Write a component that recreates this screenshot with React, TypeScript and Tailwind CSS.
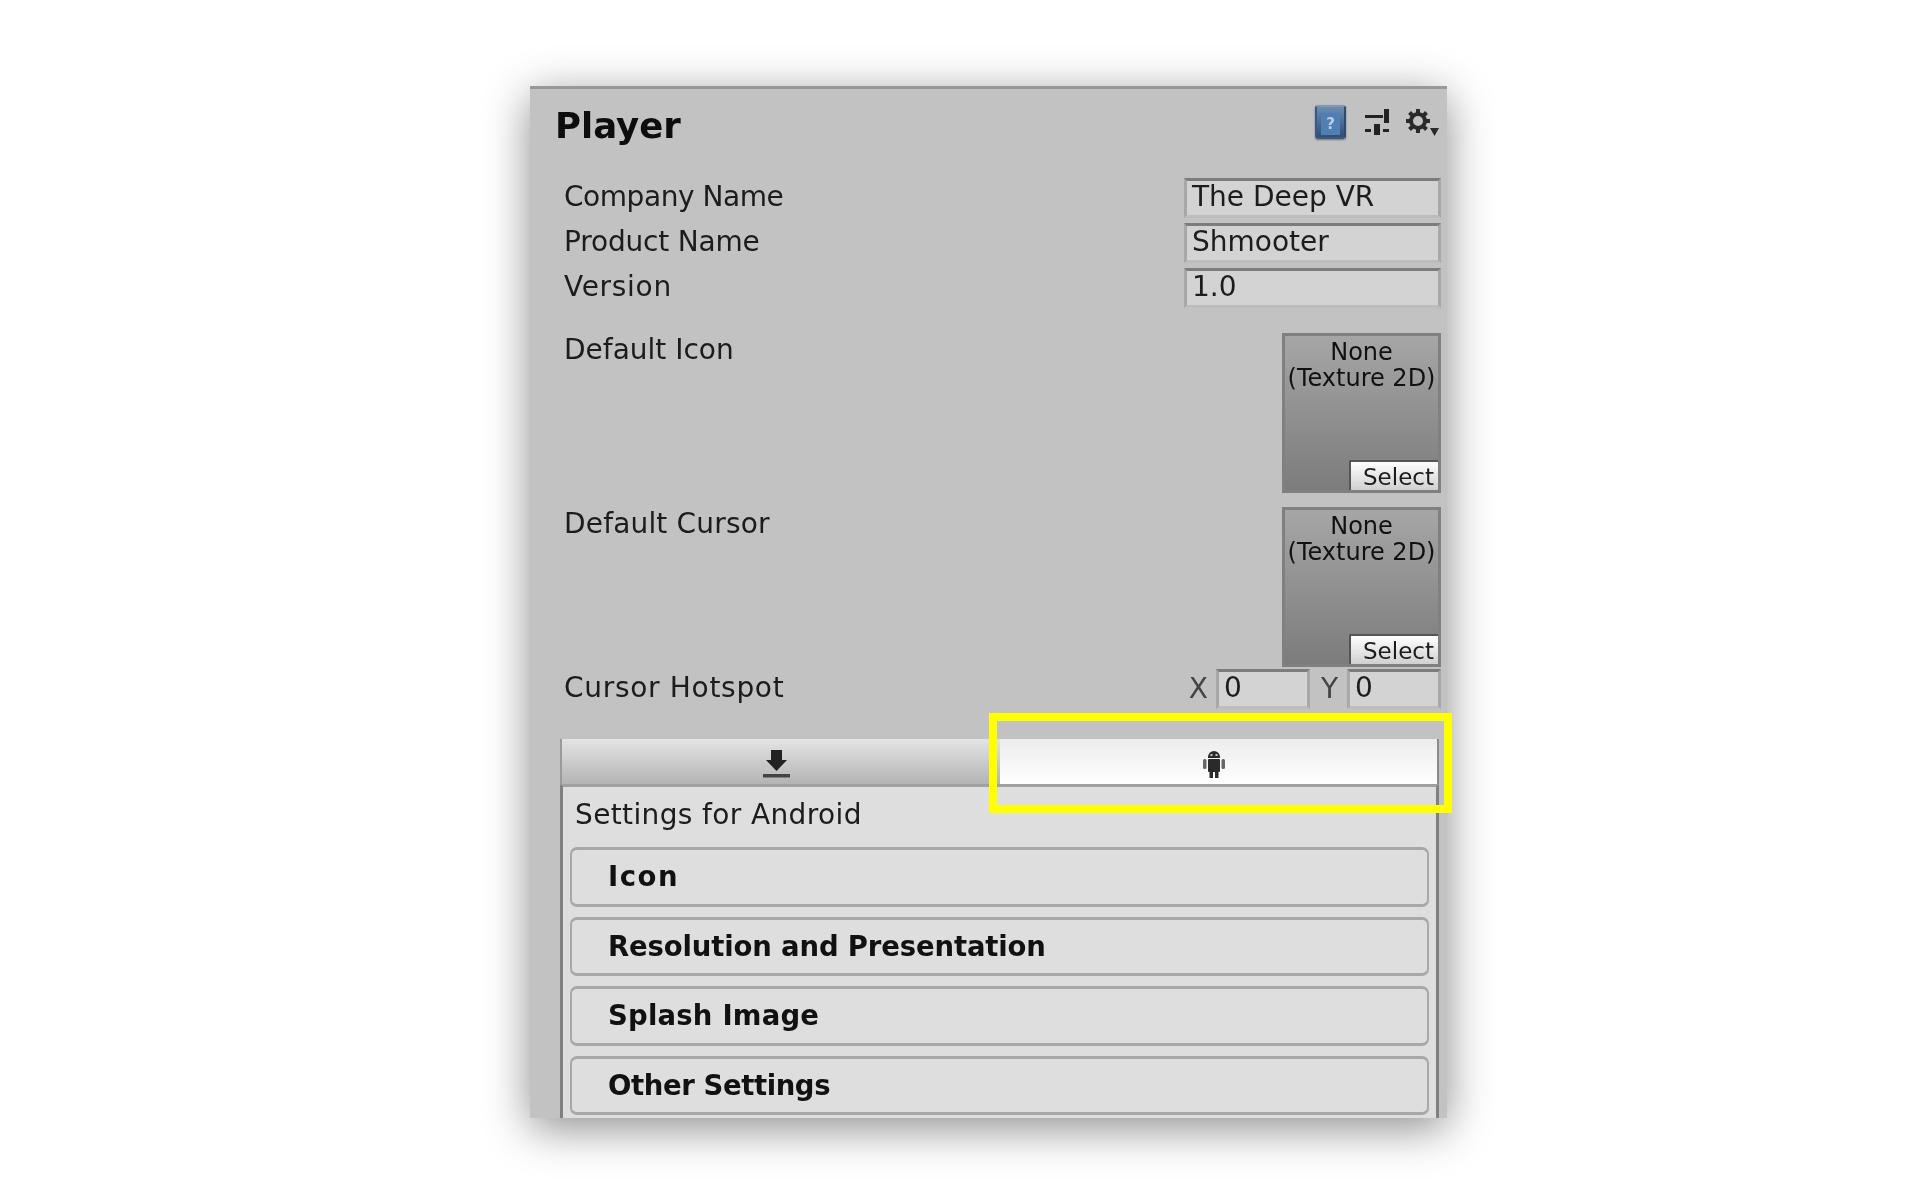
const FONT = "font-['DejaVu_Sans',sans-serif]";

function HelpIcon() {
  return (
    <div className="flex h-[34px] w-[31px] items-center justify-center rounded-[3px] border-2 border-[#3a5a85] border-t-[#8496ab] border-r-[#2f4a70] bg-gradient-to-b from-[#6a8db5] to-[#2f4d78] shadow-[0_1px_2px_rgba(0,0,0,0.4)]">
      <div className="mt-[3px] h-[22px] w-[19px] bg-[#4f7fb3] text-center text-[15px] leading-[22px] font-bold text-[#b9cde2]">?</div>
    </div>
  );
}

function PresetIcon() {
  return (
    <svg width="25" height="26" viewBox="0 0 25 26" fill="#222">
      <rect x="0" y="6" width="18" height="3" />
      <rect x="19" y="0" width="5" height="14" />
      <rect x="0" y="20" width="6" height="3" />
      <rect x="9" y="15" width="6" height="11" />
      <rect x="18" y="20" width="6" height="3" />
    </svg>
  );
}

function GearIcon() {
  return (
    <svg width="34" height="30" viewBox="0 0 34 30" fill="none">
      <circle cx="13" cy="13" r="7" stroke="#2a2a2a" strokeWidth="4" />
      <path
        d="M13 1v5M13 20v5M1 13h5M20 13h5M4.500 4.500l3.500 3.500M18 18l3.500 3.500M21.500 4.500L18 8M8 18l-3.500 3.500"
        stroke="#2a2a2a"
        strokeWidth="4"
      />
      <path d="M25 20h9l-4.500 8z" fill="#2a2a2a" />
    </svg>
  );
}

function DownloadIcon() {
  return (
    <svg width="27" height="28" viewBox="0 0 27 28" fill="#222">
      <path d="M8 0h11v10h5L13.500 21 3 10h5z" />
      <rect x="0" y="24" width="27" height="3.500" fill="#444" />
    </svg>
  );
}

function AndroidIcon() {
  return (
    <svg width="22" height="28" viewBox="0 0 22 28" fill="#2a2a2a">
      <path d="M5 7a6 6 0 0 1 12 0v1H5z" />
      <rect x="5" y="9" width="12" height="13" rx="1" />
      <rect x="0" y="9" width="3.500" height="10" rx="1.500" fill="#666" />
      <rect x="18.500" y="9" width="3.500" height="10" rx="1.500" fill="#666" />
      <rect x="6.500" y="22" width="3.500" height="6" />
      <rect x="12" y="22" width="3.500" height="6" />
      <rect x="7.500" y="4" width="2" height="2" fill="#ccc" />
      <rect x="12.500" y="4" width="2" height="2" fill="#ccc" />
    </svg>
  );
}

function TextField({ value, className }: { value: string; className: string }) {
  return (
    <div
      className={`h-[40px] border-[3px] border-[#a8a8a8] border-t-[#7c7c7c] border-b-[#bdbdbd] bg-[#d3d3d3] pl-[5px] text-[28px] leading-[31px] text-[#1c1c1c] ${className}`}
    >
      {value}
    </div>
  );
}

function FieldRow({ label, value, labelClass }: { label: string; value: string; labelClass: string }) {
  return (
    <div className="flex h-[40px] items-center justify-between">
      <span className={`pb-[3px] text-[28px] text-[#1c1c1c] ${labelClass}`}>{label}</span>
      <TextField value={value} className="w-[257px]" />
    </div>
  );
}

function ObjectField({ label, labelClass }: { label: string; labelClass: string }) {
  return (
    <div className="flex h-[160px] justify-between">
      <span className={`text-[28px] leading-[34px] text-[#1c1c1c] ${labelClass}`}>{label}</span>
      <div className="flex h-[160px] w-[159px] flex-col justify-between border-[3px] border-[#808080] bg-gradient-to-b from-[#a6a6a6] to-[#7c7c7c]">
        <div className="pt-[3px] text-center text-[24px] leading-[26px] text-[#111]">
          <div>None</div>
          <div className="whitespace-nowrap">(Texture 2D)</div>
        </div>
        <div className="flex justify-end">
          <div className="h-[30px] w-[89px] rounded-tl-[2px] border-t-[2px] border-l-[2px] border-[#555] bg-gradient-to-b from-[#ffffff] to-[#d0d0d0] pl-[12px] text-[23px] leading-[31px] text-[#1c1c1c]">
            Select
          </div>
        </div>
      </div>
    </div>
  );
}

function Foldout({ label, className }: { label: string; className: string }) {
  return (
    <div
      className={`flex h-[59.500px] items-center rounded-[7px] border-2 border-[#a8a8a8] border-t-[3px] border-b-[3px] bg-[#dedede] pl-[36px] text-[27.500px] font-bold text-[#111] ${className}`}
    >
      {label}
    </div>
  );
}

export default function App() {
  return (
    <div className={`min-h-screen bg-white pt-[86px] pl-[530px] ${FONT}`}>
      <div className="relative h-[1032px] w-[917px] border-t-[3px] border-[#989898] bg-[#c2c2c2] shadow-[0_10px_42px_rgba(0,0,0,0.45)] blur-[0.5px]">
        <div className="flex h-[89px] justify-between pr-[8px] pl-[25px]">
          <h1 className="pt-[14px] text-[35.500px] leading-[46px] font-bold text-[#0d0d0d]">Player</h1>
          <div className="flex items-start pt-[16px]">
            <HelpIcon />
            <div className="mt-[4px] ml-[19px]">
              <PresetIcon />
            </div>
            <div className="mt-[3px] ml-[15px]">
              <GearIcon />
            </div>
          </div>
        </div>

        <div className="flex flex-col pr-[6px] pl-[34px]">
          <div className="flex flex-col gap-[5px]">
            <FieldRow label="Company Name" value="The Deep VR" labelClass="tracking-[-0.45px]" />
            <FieldRow label="Product Name" value="Shmooter" labelClass="tracking-[-0.18px]" />
            <FieldRow label="Version" value="1.0" labelClass="tracking-[0.7px]" />
          </div>
          <div className="mt-[25px] flex flex-col gap-[14px]">
            <ObjectField label="Default Icon" labelClass="" />
            <ObjectField label="Default Cursor" labelClass="tracking-[0.17px]" />
          </div>
          <div className="mt-[2px] flex h-[40px] items-center justify-between">
            <span className="pb-[3px] text-[28px] tracking-[0.7px] text-[#1c1c1c]">Cursor Hotspot</span>
            <div className="flex items-center text-[28px] text-[#444]">
              <span className="mr-[8px]">X</span>
              <TextField value="0" className="w-[94px]" />
              <span className="mr-[9px] ml-[11px]">Y</span>
              <TextField value="0" className="w-[94px]" />
            </div>
          </div>
        </div>

        <div className="mt-[30px] ml-[30px] w-[879px]">
          <div className="flex h-[45px]">
            <div className="flex w-[440px] items-center justify-center border-l-2 border-[#9a9a9a] bg-gradient-to-b from-[#e4e4e4] to-[#b4b4b4] pt-[5px] pr-[10px]">
              <DownloadIcon />
            </div>
            <div className="flex flex-1 items-center justify-center border-r-2 border-[#8a8a8a] bg-gradient-to-b from-[#ececec] to-[#ffffff] pt-[5px] pr-[9px]">
              <AndroidIcon />
            </div>
          </div>
          <div className="flex h-[334px] flex-col border-x-[3px] border-t-[3px] border-[#808080] border-t-[#a0a0a0] bg-[#dedede] px-[7px]">
            <div className="h-[60px] pt-[10px] pl-[5px] text-[28px] leading-[36px] tracking-[0.37px] text-[#1c1c1c]">Settings for Android</div>
            <div className="flex flex-col gap-[10.170px]">
              <Foldout label="Icon" className="tracking-[1.5px]" />
              <Foldout label="Resolution and Presentation" className="tracking-[-0.15px]" />
              <Foldout label="Splash Image" className="tracking-[0.2px]" />
              <Foldout label="Other Settings" className="tracking-[-0.4px]" />
            </div>
          </div>
        </div>

        <div className="pointer-events-none absolute top-[624px] left-[459px] h-[100px] w-[463px] border-[8px] border-[#ffff00]" />
      </div>
    </div>
  );
}
